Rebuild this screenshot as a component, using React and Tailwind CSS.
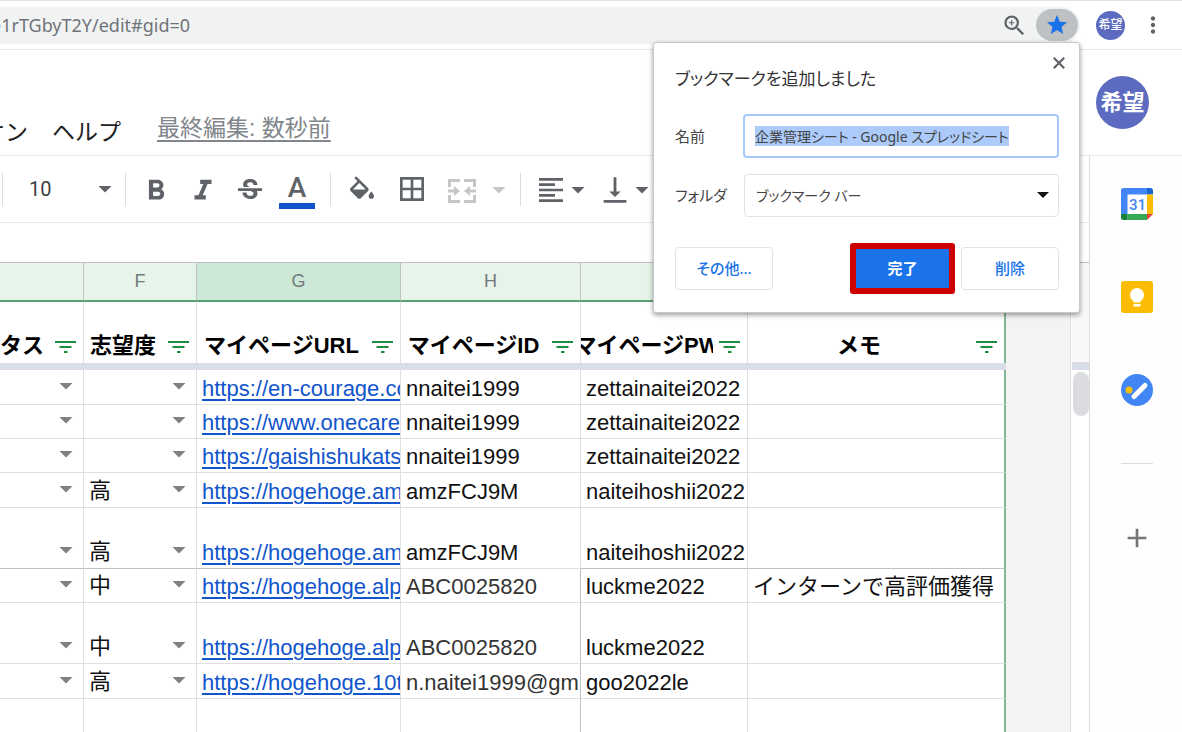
import React, { useEffect, useRef, useState } from "react";
import {
  MdAdd,
  MdBorderAll,
  MdFormatAlignLeft,
  MdFormatBold,
  MdFormatItalic,
  MdMoreVert,
  MdStar,
  MdStrikethroughS,
  MdVerticalAlignBottom,
  MdZoomIn,
} from "react-icons/md";

const COLUMNS = [
  { letter: "E", title: "ステータス", width: "w-[84px]" },
  { letter: "F", title: "志望度", width: "w-[113px]" },
  { letter: "G", title: "マイページURL", width: "w-[204px]", selected: true },
  { letter: "H", title: "マイページID", width: "w-[180px]" },
  { letter: "I", title: "マイページPW", width: "w-[167px]" },
  { letter: "J", title: "メモ", width: "w-[258px]" },
];

const ROWS = [
  { url: "https://en-courage.co", id: "nnaitei1999", pw: "zettainaitei2022", h: "h-[35px]" },
  { url: "https://www.onecare", id: "nnaitei1999", pw: "zettainaitei2022", h: "h-[34px]" },
  { url: "https://gaishishukats", id: "nnaitei1999", pw: "zettainaitei2022", h: "h-[34px]" },
  { level: "高", url: "https://hogehoge.am", id: "amzFCJ9M", pw: "naiteihoshii2022", h: "h-[35px]" },
  { level: "高", url: "https://hogehoge.am", id: "amzFCJ9M", pw: "naiteihoshii2022", h: "h-[61px]", strong: true },
  { level: "中", url: "https://hogehoge.alp", id: "ABC0025820", pw: "luckme2022", memo: "インターンで高評価獲得", h: "h-[34px]", dim: true },
  { level: "中", url: "https://hogehoge.alp", id: "ABC0025820", pw: "luckme2022", h: "h-[61px]", dim: true },
  { level: "高", url: "https://hogehoge.10t", id: "n.naitei1999@gm", pw: "goo2022le", h: "h-[35px]", dim: true },
];

function Caret({ className = "" }) {
  return (
    <svg viewBox="0 0 14 7" className={`h-[7px] w-[14px] shrink-0 ${className}`} fill="currentColor" aria-hidden="true">
      <path d="M0.5 0h13L7 6.500z" />
    </svg>
  );
}

function FilterIcon() {
  return (
    <svg viewBox="0 0 21 13" className="h-[13px] w-[21px]" fill="#1e8e3e" aria-hidden="true">
      <path d="M0 1h21v2H0zM4.5 6h12v2h-12zM9 11h3.5v2H9z" />
    </svg>
  );
}

function FillIcon() {
  return (
    <svg viewBox="3 0 18 17" className="h-[23px] w-6" fill="currentColor" aria-hidden="true">
      <path d="M16.56 8.94 7.62 0 6.21 1.41l2.38 2.38-5.15 5.15c-.59.59-.59 1.54 0 2.12l5.5 5.5c.29.29.68.44 1.06.44s.77-.15 1.06-.44l5.5-5.5c.59-.58.59-1.53 0-2.12zM5.21 10 10 5.21 14.79 10zM19 11.500s-2 2.170-2 3.500c0 1.100.9 2 2 2s2-.9 2-2c0-1.330-2-3.500-2-3.500z" />
    </svg>
  );
}

function MergeIcon() {
  return (
    <svg viewBox="0 0 28 24" className="h-6 w-7" fill="currentColor" aria-hidden="true">
      <path d="M0 0h12v3H3v5H0zM16 0h12v8h-3V3h-9zM0 16h3v5h9v3H0zM25 16h3v8H16v-3h9z" />
      <path d="M0 10.500h6V7l6 5-6 5v-3.500H0zM28 10.500h-6V7l-6 5 6 5v-3.500h6z" />
    </svg>
  );
}

function CloseIcon() {
  return (
    <svg viewBox="0 0 12 12" className="h-3 w-3" fill="none" stroke="currentColor" strokeWidth="2.2" aria-hidden="true">
      <path d="M0.800 0.800 11.200 11.200M11.200 0.800 0.800 11.200" />
    </svg>
  );
}

function CalendarIcon() {
  return (
    <svg viewBox="0 0 32 32" className="h-8 w-8" aria-hidden="true">
      <rect x="6" y="6" width="20" height="20" fill="#fff" />
      <path d="M2.500 0H26v6.500H6.500V26H0V2.500A2.500 2.500 0 0 1 2.500 0z" fill="#4285f4" />
      <path d="M26 0h3.500A2.500 2.500 0 0 1 32 2.500v4h-6z" fill="#1967d2" />
      <path d="M26 6.500h6V26h-6z" fill="#fbbc04" />
      <path d="M6.500 26H26v6H6.500z" fill="#34a853" />
      <path d="M0 26h6.500v6h-4A2.500 2.500 0 0 1 0 29.500z" fill="#188038" />
      <path d="M26 26h6l-6 6z" fill="#ea4335" />
      <text x="16.500" y="22" textAnchor="middle" fontSize="15" fontWeight="500" fontFamily="Roboto, sans-serif" fill="#4285f4">31</text>
    </svg>
  );
}

function KeepIcon() {
  return (
    <svg viewBox="0 0 32 32" className="h-8 w-8" aria-hidden="true">
      <rect width="32" height="32" rx="3" fill="#fbbc04" />
      <circle cx="16" cy="14" r="7" fill="#fff" />
      <path d="M12.500 18h7v3.500h-7zM12.500 23h7v2.500h-7z" fill="#fff" />
    </svg>
  );
}

function TasksIcon() {
  return (
    <svg viewBox="0 0 32 32" className="h-8 w-8" aria-hidden="true">
      <circle cx="16" cy="16" r="16" fill="#4285f4" />
      <path d="M13 22.500 24 11.500" stroke="#fff" strokeWidth="5" strokeLinecap="round" />
      <circle cx="8" cy="16" r="3.500" fill="#fbbc04" />
    </svg>
  );
}

function BrowserBar() {
  return (
    <div className="flex h-[50px] items-center border-y border-t-[#dee1e6] border-b-[#e4e6e8] bg-white pr-4">
      <div className="flex h-[37px] min-w-0 flex-1 items-center overflow-hidden rounded-r-full bg-[#f1f3f3] pr-[2px]">
        <input
          aria-label="アドレス"
          defaultValue="e1rTGbyT2Y/edit#gid=0"
          className="-ml-[9px] min-w-0 flex-1 bg-transparent font-['Noto_Sans',sans-serif] text-[18px] text-[#707478] outline-none"
        />
        <button aria-label="ズーム" className="mr-2 text-[#5f6368]">
          <MdZoomIn size={27} />
        </button>
        <button aria-label="ブックマーク" className="flex h-8 w-[42px] items-center justify-center rounded-full bg-[#bec1c3] text-[#1a73e8]">
          <MdStar size={24} />
        </button>
      </div>
      <button className="ml-4 h-[29px] w-[29px] rounded-full bg-[#5c6bc0] text-[12px] font-medium text-white">希望</button>
      <button aria-label="メニュー" className="ml-[15px] text-[#5f6368]">
        <MdMoreVert size={26} />
      </button>
    </div>
  );
}

function DocHeader() {
  return (
    <header className="flex h-[106px] items-center border-b border-[#e4e6e8] bg-white pr-[33px]">
      <nav className="flex min-w-0 flex-1 items-center gap-6 pt-[58px] text-[23px] leading-7 text-[#222]">
        <button className="flex w-7 justify-end overflow-hidden whitespace-nowrap">アドオン</button>
        <button>ヘルプ</button>
        <a href="#history" className="mb-2 ml-3 text-[#80868b] underline decoration-2 underline-offset-4">
          最終編集: 数秒前
        </a>
      </nav>
      <button className="h-[53px] w-[53px] rounded-full bg-[#5c6bc0] text-[22px] font-bold text-white">希望</button>
    </header>
  );
}

function ToolButton({ label, children, className = "" }) {
  return (
    <button aria-label={label} className={`flex h-9 w-8 shrink-0 items-center justify-center ${className}`}>
      {children}
    </button>
  );
}

function Separator() {
  return <div className="h-[33px] w-px shrink-0 bg-[#dadce0]" />;
}

function Toolbar() {
  return (
    <div className="flex h-[67px] items-center overflow-hidden border-b border-[#e4e6e8] bg-white pl-[2px] text-[#5f6368]">
      <Separator />
      <div className="relative w-[122px] shrink-0">
        <select
          aria-label="フォントサイズ"
          className="w-full appearance-none bg-transparent pl-[26px] font-[Roboto,sans-serif] text-[20px] text-[#3c4043] outline-none"
        >
          <option>10</option>
        </select>
        <Caret className="pointer-events-none absolute right-[13px] top-3" />
      </div>
      <Separator />
      <div className="flex items-center gap-[15px] pl-[14px] pr-[17px] pt-1">
        <ToolButton label="太字"><MdFormatBold size={34} className="shrink-0" /></ToolButton>
        <ToolButton label="斜体"><MdFormatItalic size={34} className="shrink-0" /></ToolButton>
        <ToolButton label="取り消し線"><MdStrikethroughS size={32} /></ToolButton>
        <button aria-label="テキストの色" className="-mx-[2px] flex w-9 flex-col items-center">
          <span className="font-[Roboto,sans-serif] text-[28px] font-medium leading-[30px]">A</span>
          <span className="h-[6px] w-full bg-[#1155cc]" />
        </button>
      </div>
      <Separator />
      <div className="flex items-center gap-[18px] pl-[15px]">
        <ToolButton label="塗りつぶしの色" className="pb-1"><FillIcon /></ToolButton>
        <ToolButton label="枠線"><MdBorderAll size={32} /></ToolButton>
        <ToolButton label="セルを結合" className="pt-1 text-[#c4c6c8]"><MergeIcon /></ToolButton>
      </div>
      <button aria-label="結合の種類" className="px-[14px] pt-[2px] text-[#c4c6c8]"><Caret /></button>
      <Separator />
      <div className="flex items-center gap-1 pl-[14px] pt-[2px]">
        <ToolButton label="水平方向の配置"><MdFormatAlignLeft size={32} /></ToolButton>
        <button aria-label="水平方向の配置を選択"><Caret /></button>
        <ToolButton label="垂直方向の配置" className="ml-[10px]"><MdVerticalAlignBottom size={34} className="shrink-0" /></ToolButton>
        <button aria-label="垂直方向の配置を選択"><Caret /></button>
      </div>
    </div>
  );
}

function CellText({ children, className = "" }) {
  return <div className={`overflow-hidden whitespace-nowrap pb-[3px] pl-[5px] leading-6 ${className}`}>{children}</div>;
}

function CellMenu({ value, label }) {
  return (
    <div className="flex items-center justify-between pb-1 pl-[5px] pr-[10px] leading-6">
      <span>{value}</span>
      <button aria-label={label} className="flex h-6 items-center pb-[3px] text-[#808080]">
        <Caret />
      </button>
    </div>
  );
}

function Sheet() {
  const cell = (row) => `border-b border-r border-r-[#e0e0e0] align-bottom ${row.strong ? "border-b-[#c0c0c0]" : "border-b-[#e0e0e0]"}`;
  const idCell = (row) => `border-b border-r border-b-[#e0e0e0] align-bottom ${row.dim ? "border-r-[#c0c0c0] text-[#333]" : "border-r-[#e0e0e0]"}`;
  const lastCell = (row) => `border-b border-r-2 border-r-[#7fb892] align-bottom ${row.strong ? "border-b-[#c0c0c0]" : "border-b-[#e0e0e0]"}`;

  return (
    <table className="w-[1006px] shrink-0 table-fixed border-separate border-spacing-0 bg-white text-[22px] text-[#111]">
      <colgroup>
        {COLUMNS.map((c) => <col key={c.letter} className={c.width} />)}
      </colgroup>
      <thead>
        <tr>
          {COLUMNS.map((c) => (
            <th
              key={c.letter}
              className={`h-10 border-b-2 border-r border-t border-b-[#57a271] border-r-[#c0c0c0] border-t-[#c0c0c0] px-0 pb-[2px] pt-0 text-[18px] font-normal leading-6 text-[#74797c] ${
                c.selected ? "bg-[#cde8d7]" : "bg-[#e6f4ea]"
              }`}
            >
              {c.letter !== "E" && c.letter}
            </th>
          ))}
        </tr>
        <tr>
          {COLUMNS.map((c) => (
            <th
              key={c.letter}
              className={`h-[61px] p-0 align-bottom font-bold text-black ${c.letter === "J" ? "border-r-2 border-[#7fb892]" : "border-r border-[#e0e0e0]"}`}
            >
              <div className="flex items-center pb-[5px] leading-6">
                <div className={`flex min-w-0 flex-1 overflow-hidden ${c.letter === "E" ? "justify-end pr-[5px]" : "justify-center"}`}>
                  <span className="shrink-0 whitespace-nowrap">{c.title}</span>
                </div>
                <button aria-label={`${c.title}のフィルタ`} className="w-[34px] shrink-0 pl-[6px]">
                  <FilterIcon />
                </button>
              </div>
            </th>
          ))}
        </tr>
      </thead>
      <tbody>
        {/* Frozen row handle */}
        <tr>
          <td colSpan={6} className="h-[7px] bg-[#d9dde8] p-0" />
        </tr>
        {ROWS.map((row, i) => (
          <tr key={i} className={row.h}>
            <td className={cell(row)}><CellMenu label="ステータスを選択" /></td>
            <td className={cell(row)}><CellMenu value={row.level} label="志望度を選択" /></td>
            <td className={cell(row)}>
              <CellText>
                <a href={row.url} className="text-[#1155cc] underline decoration-2 underline-offset-3">{row.url}</a>
              </CellText>
            </td>
            <td className={idCell(row)}><CellText>{row.id}</CellText></td>
            <td className={cell(row)}><CellText>{row.pw}</CellText></td>
            <td className={lastCell(row)}><CellText>{row.memo}</CellText></td>
          </tr>
        ))}
        <tr className="h-[61px]">
          {COLUMNS.map((c) => (
            <td
              key={c.letter}
              className={c.letter === "J" ? "border-r-2 border-[#7fb892]" : c.letter === "H" ? "border-r border-[#c0c0c0]" : "border-r border-[#e0e0e0]"}
            />
          ))}
        </tr>
      </tbody>
    </table>
  );
}

function SidePanel() {
  return (
    <aside className="flex w-[93px] shrink-0 flex-col items-center border-l border-[#dadce0] bg-[#fefefe] pl-[2px] pt-8">
      <div className="flex flex-col gap-[61px]">
        <button aria-label="カレンダー"><CalendarIcon /></button>
        <button aria-label="Keep"><KeepIcon /></button>
        <button aria-label="ToDo リスト"><TasksIcon /></button>
      </div>
      <div className="mt-[57px] h-px w-8 bg-[#dadce0]" />
      <button aria-label="アドオンを取得" className="mt-[58px] text-[#757575]"><MdAdd size={32} /></button>
    </aside>
  );
}

function BookmarkPopup({ onClose }) {
  const nameRef = useRef(null);

  // The name is ready to be overwritten as soon as the popup opens
  useEffect(() => {
    nameRef.current?.focus();
    nameRef.current?.select();
  }, []);

  return (
    <form
      onSubmit={(e) => e.preventDefault()}
      className="absolute right-[102px] top-[42px] w-[427px] rounded-[3px] border border-[#c6c8ca] bg-white pb-[18px] pl-[21px] pr-5 pt-[22px] font-['Noto_Sans','Noto_Sans_CJK_JP',sans-serif] text-[15px] text-[#444] shadow-[0_2px_5px_rgba(0,0,0,0.4)] [font-feature-settings:'palt']"
    >
      <button type="button" aria-label="閉じる" onClick={onClose} className="absolute right-[14px] top-[14px] text-[#5f6368]">
        <CloseIcon />
      </button>
      <h2 className="text-[17px] leading-7 text-[#333]">ブックマークを追加しました</h2>
      <div className="mt-[21px] flex items-center">
        <label htmlFor="bookmark-name" className="w-[68px] shrink-0">名前</label>
        <input
          id="bookmark-name"
          ref={nameRef}
          defaultValue="企業管理シート - Google スプレッドシート"
          className="h-11 min-w-0 flex-1 rounded border-2 border-[#a8c7fa] bg-white px-[10px] text-[14px] outline-none selection:bg-[#accbfb] selection:text-[#444]"
        />
      </div>
      <div className="mt-4 flex items-center">
        <label htmlFor="bookmark-folder" className="w-[69px] shrink-0">フォルダ</label>
        <div className="relative min-w-0 flex-1">
          <select id="bookmark-folder" className="h-[43px] w-full appearance-none rounded border border-[#e0e2e4] bg-white px-[11px] text-[14px] outline-none">
            <option>ブックマーク バー</option>
          </select>
          <svg viewBox="0 0 12 6" className="pointer-events-none absolute right-[10px] top-[18px] h-[6px] w-3" fill="#111" aria-hidden="true">
            <path d="M0 0h12L6 6z" />
          </svg>
        </div>
      </div>
      <div className="mt-[26px] flex items-center gap-[6px] text-[#1a73e8]">
        <button type="button" className="mr-auto h-[43px] w-[98px] rounded border border-[#e0e2e4] font-medium">その他...</button>
        <button className="h-[51px] w-[105px] rounded-[3px] border-[6px] border-[#cc0000] bg-[#1a73e8] font-bold text-white">完了</button>
        <button type="button" className="h-[43px] w-[98px] rounded border border-[#e0e2e4] font-medium">削除</button>
      </div>
    </form>
  );
}

export default function App() {
  const [showPopup, setShowPopup] = useState(true);

  return (
    <div className="relative flex h-screen flex-col overflow-hidden bg-white font-['Liberation_Sans','Noto_Sans_CJK_JP',sans-serif]">
      <BrowserBar />
      <DocHeader />
      <div className="flex min-h-0 flex-1">
        <main className="flex min-w-0 flex-1 flex-col">
          <Toolbar />
          <div className="h-[39px] shrink-0" />
          <div className="flex min-h-0 flex-1 items-start overflow-hidden bg-[#f3f3f3]">
            <Sheet />
            <div className="min-w-0 flex-1 self-stretch border-t border-[#c0c0c0]" />

            {/* Vertical scrollbar */}
            <div className="flex w-[19px] shrink-0 flex-col self-stretch border-l border-[#dadce0] bg-white pl-px">
              <div className="h-[101px] shrink-0 border-y border-t-[#c0c0c0] border-b-[#dadce0] bg-[#f8f8f8]" />
              <div className="h-[7px] shrink-0 bg-[#d9dde8]" />
              <div className="ml-px mt-[2px] h-11 rounded-full bg-[#dadce0]" />
            </div>
          </div>
        </main>
        <SidePanel />
      </div>
      {showPopup && <BookmarkPopup onClose={() => setShowPopup(false)} />}
    </div>
  );
}
